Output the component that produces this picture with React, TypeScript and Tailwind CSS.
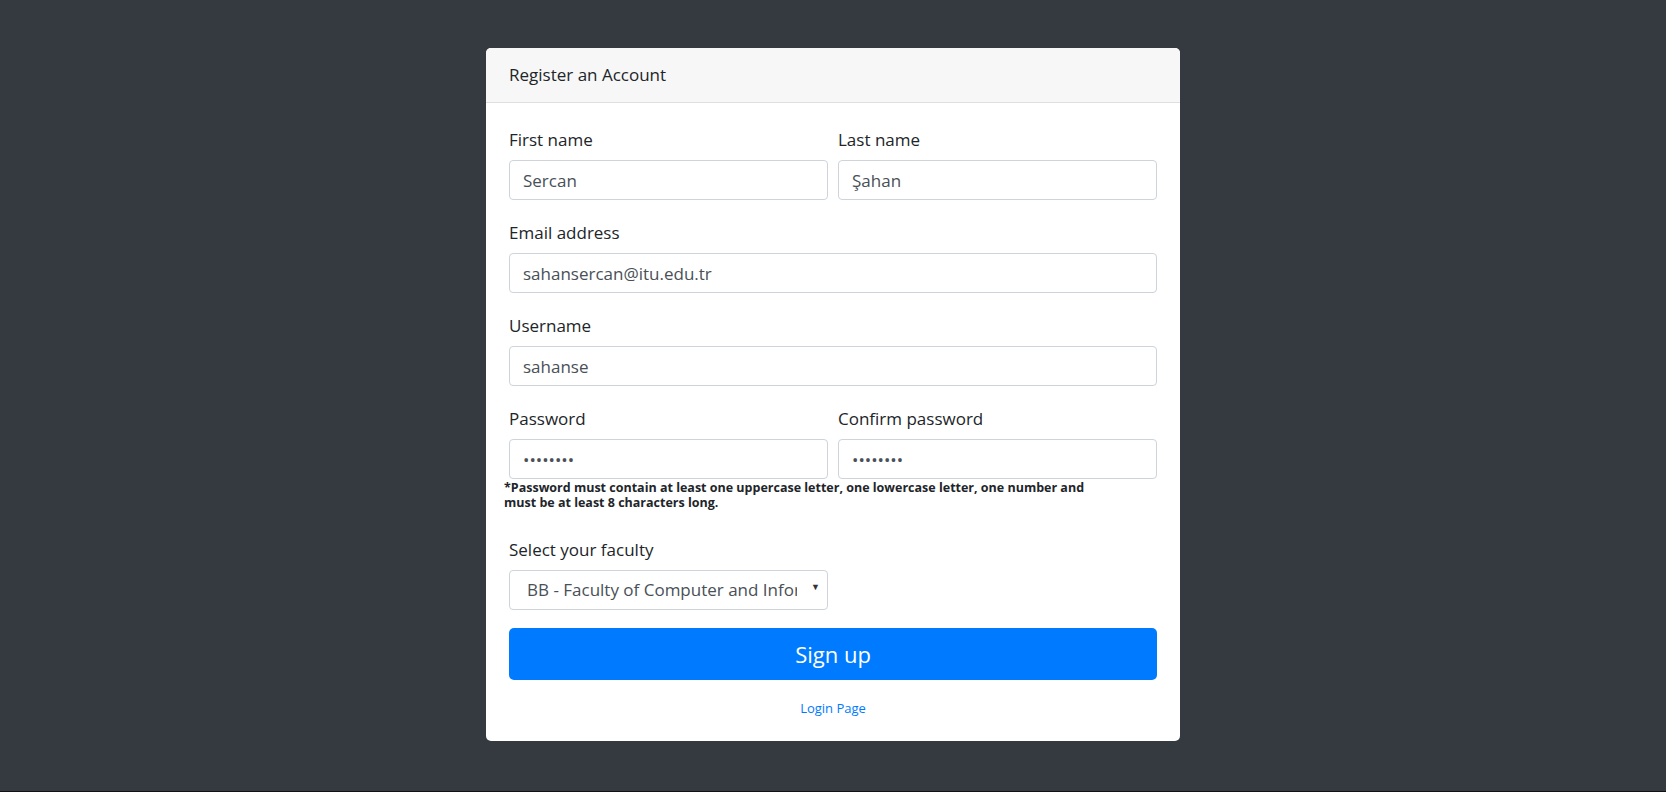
import React from "react";

const font = { fontFamily: '"Open Sans", "Noto Sans", sans-serif' };

function Field({ label, value, type = "text" }: { label: string; value: string; type?: string }) {
  return (
    <div className="flex flex-col">
      <label className="text-[17px] leading-[25px] text-[#212529] mb-[8px]">{label}</label>
      <input
        type={type}
        defaultValue={value}
        readOnly
        className="h-[40px] w-full rounded-[4px] border border-[#ced4da] bg-white px-[13px] text-[17px] text-[#495057] outline-none"
        style={font}
      />
    </div>
  );
}

export default function App() {
  return (
    <div
      className="w-full h-[792px] bg-[#343a40] border-b border-[#0f1113] flex justify-center pt-[48px]"
      style={font}
    >
      <div className="w-[694px] h-[693px] bg-white rounded-[5px] overflow-hidden flex flex-col">
        <div className="h-[55px] bg-[#f7f7f7] border-b border-[#dfdfdf] px-[23px] flex items-center text-[17px] text-[#212529]">
          Register an Account
        </div>
        <div className="px-[23px] pt-[24px] flex flex-col">
          <div className="grid grid-cols-2 gap-x-[10px] mb-[20px]">
            <Field label="First name" value="Sercan" />
            <Field label="Last name" value="Şahan" />
          </div>
          <div className="mb-[20px]">
            <Field label="Email address" value="sahansercan@itu.edu.tr" />
          </div>
          <div className="mb-[20px]">
            <Field label="Username" value="sahanse" />
          </div>
          <div className="grid grid-cols-2 gap-x-[10px]">
            <Field label="Password" value="12345678" type="password" />
            <Field label="Confirm password" value="12345678" type="password" />
          </div>
          <p className="ml-[-5px] mt-[1px] text-[12.5px] leading-[15px] font-bold text-[#212529]">
            *Password must contain at least one uppercase letter, one lowercase letter, one number and
            <br />
            must be at least 8 characters long.
          </p>
          <div className="mt-[27px] flex flex-col w-[319px]">
            <label className="text-[17px] leading-[25px] text-[#212529] mb-[8px]">Select your faculty</label>
            <div className="relative h-[40px] w-full">
              <select
                defaultValue="bb"
                className="appearance-none h-[40px] w-full rounded-[4px] border border-[#ced4da] bg-white pl-[17px] pr-[30px] text-[17px] text-[#495057] outline-none"
                style={font}
              >
                <option value="bb">BB - Faculty of Computer and Informatics Engineering</option>
              </select>
              <span className="pointer-events-none absolute right-[8px] top-[10px] text-[9px] text-[#333]">▼</span>
            </div>
          </div>
          <button className="mt-[18px] h-[52px] w-full rounded-[5px] bg-[#007bff] text-white text-[22px]" style={font}>
            Sign up
          </button>
          <div className="mt-[19px] text-center text-[13px] leading-[18px]">
            <a href="#" className="text-[#007bff]">Login Page</a>
          </div>
        </div>
      </div>
    </div>
  );
}
